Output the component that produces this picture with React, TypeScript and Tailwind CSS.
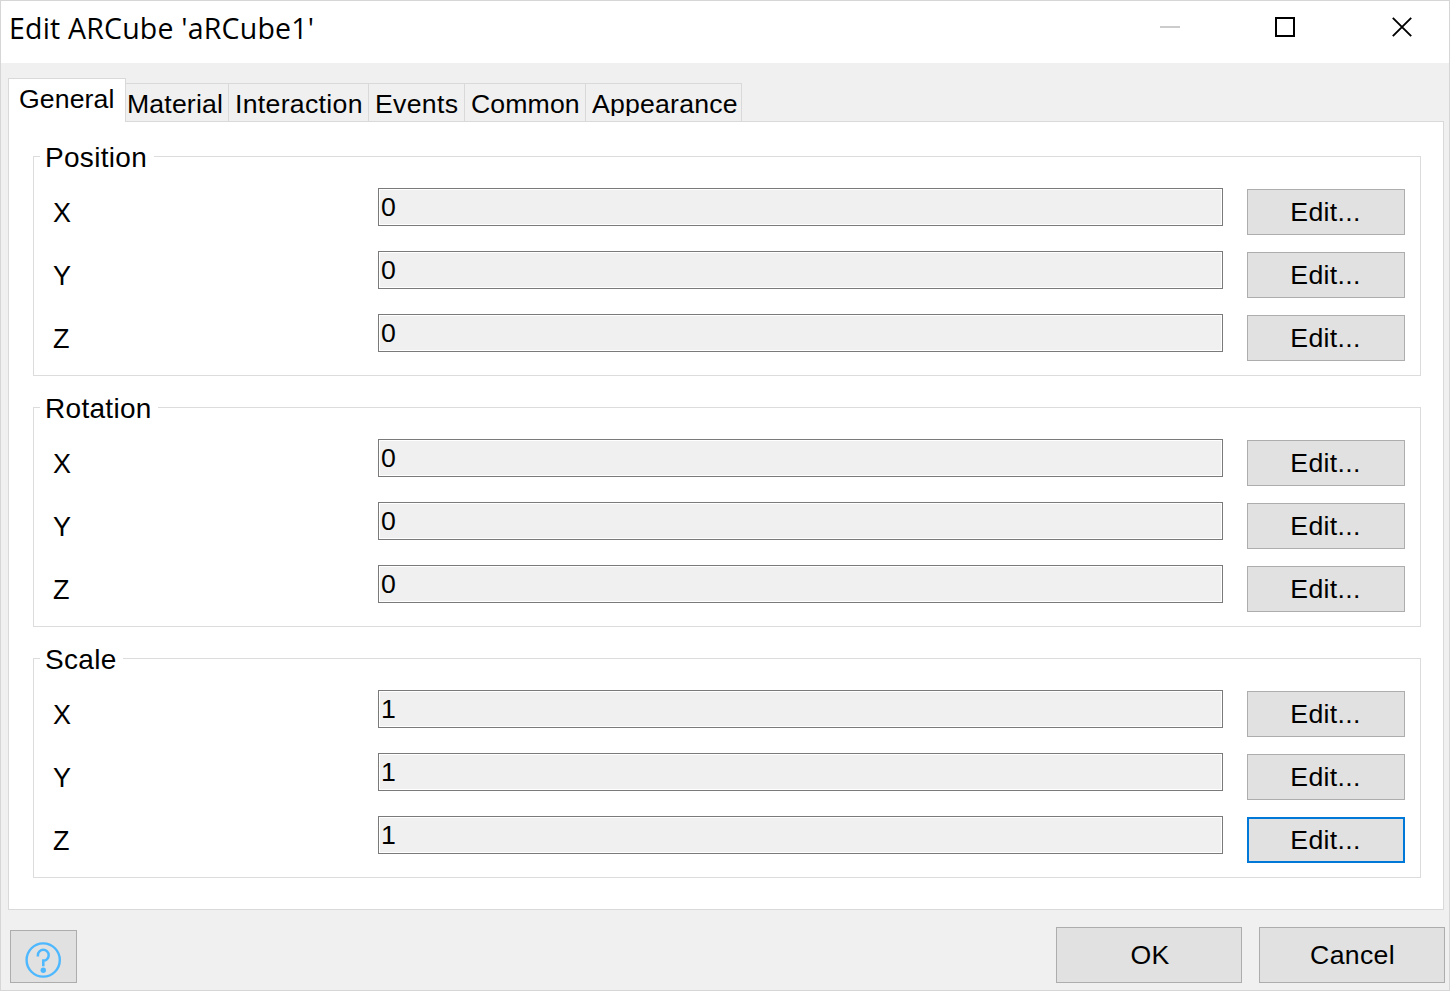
import React from "react";

type Axis = { label: string; value: string; focused?: boolean };
type GroupData = { title: string; legendClass: string; rows: Axis[] };

const groups: GroupData[] = [
  {
    title: "Position",
    legendClass: "w-[114px] tracking-[0.3px]",
    rows: [
      { label: "X", value: "0" },
      { label: "Y", value: "0" },
      { label: "Z", value: "0" },
    ],
  },
  {
    title: "Rotation",
    legendClass: "w-[118px] tracking-[0.3px]",
    rows: [
      { label: "X", value: "0" },
      { label: "Y", value: "0" },
      { label: "Z", value: "0" },
    ],
  },
  {
    title: "Scale",
    legendClass: "w-[83px] tracking-[0.3px]",
    rows: [
      { label: "X", value: "1" },
      { label: "Y", value: "1" },
      { label: "Z", value: "1", focused: true },
    ],
  },
];

const tabs = [
  { label: "Material", className: "w-[103px] pl-[1px] tracking-[0.15px]", textClass: "" },
  { label: "Interaction", className: "w-[140px] pl-[6px] tracking-[0.3px]", textClass: "" },
  { label: "Events", className: "w-[96px] pl-[6px] tracking-[0.3px]", textClass: "" },
  { label: "Common", className: "w-[121px] pl-[6px] tracking-[0.1px]", textClass: "" },
  {
    label: "Appearance",
    className: "w-[156px] pl-[6px] tracking-[0.2px]",
    textClass: "overflow-hidden",
  },
];

function TitleBar() {
  return (
    <header className="flex h-[62px] shrink-0 items-start justify-between bg-white">
      <h1 className="ml-2 mt-[7px] whitespace-nowrap font-['Open_Sans',sans-serif] text-[28.5px] leading-[40px] tracking-[0.2px]">
        Edit ARCube 'aRCube1'
      </h1>
      <div className="mr-[35px] mt-[15px] flex gap-[92px]">
        <svg width="24" height="24" viewBox="0 0 24 24">
          <rect x="2" y="10" width="20" height="2" fill="#cccccc" />
        </svg>
        <svg width="24" height="24" viewBox="0 0 24 24">
          <rect x="2" y="2" width="18" height="18" fill="none" stroke="#000" strokeWidth="2" />
        </svg>
        <svg width="24" height="24" viewBox="0 0 24 24">
          <path d="M2.8 1.8 L21.2 20.2 M21.2 1.8 L2.8 20.2" stroke="#000" strokeWidth="1.9" />
        </svg>
      </div>
    </header>
  );
}

function TabStrip() {
  return (
    <nav className="ml-[7px] flex h-[44px] items-end">
      <button className="relative z-10 flex h-[44px] w-[118px] items-start whitespace-nowrap border border-b-0 border-[#d9d9d9] bg-white pl-[10px] tracking-[0.1px]">
        <span className="leading-[40px]">General</span>
      </button>
      {tabs.map((tab) => (
        <button
          key={tab.label}
          className={`flex h-[39px] items-start whitespace-nowrap border-y border-r border-[#d9d9d9] ${tab.className}`}
        >
          <span className={`h-[32px] leading-[40px] ${tab.textClass}`}>{tab.label}</span>
        </button>
      ))}
    </nav>
  );
}

function AxisRow({ label, value, focused }: Axis) {
  return (
    <div className="flex h-[63px] items-start">
      <span className="w-[326px] pl-[1px] text-[27px] leading-[50px]">{label}</span>
      <div className="h-[38px] w-[845px] border border-[#7a7a7a] bg-white p-px">
        <div className="h-full bg-[#f0f0f0] pl-px leading-[34px]">{value}</div>
      </div>
      <button
        className={`ml-6 mt-px flex h-[46px] w-[158px] items-center justify-center bg-[#e1e1e1] pr-[1px] tracking-[0.3px] ${
          focused ? "border-2 border-[#0078d7]" : "border border-[#adadad]"
        }`}
      >
        Edit...
      </button>
    </div>
  );
}

function Group({ title, legendClass, rows }: GroupData) {
  return (
    <section className="h-[220px] w-[1388px] border border-[#dcdcdc]">
      <h2
        className={`-mt-[15px] ml-[6px] h-8 whitespace-nowrap bg-white pl-[5px] text-[28px] leading-8 ${legendClass}`}
      >
        {title}
      </h2>
      <div className="mt-[14px] pl-[18px]">
        {rows.map((row) => (
          <AxisRow key={row.label} {...row} />
        ))}
      </div>
    </section>
  );
}

export default function App() {
  return (
    <div className="flex h-[991px] w-[1450px] flex-col overflow-hidden border border-[#d6d6d6] bg-[#f0f0f0] font-['Liberation_Sans',Arial,sans-serif] text-[26.67px] text-black">
      <TitleBar />
      <div className="mt-[15px]">
        <TabStrip />
      </div>
      <main className="-mt-px ml-[7px] flex h-[789px] w-[1436px] flex-col gap-[31px] border border-[#d9d9d9] bg-white pl-[24px] pt-[34px]">
        {groups.map((group) => (
          <Group key={group.title} {...group} />
        ))}
      </main>
      <footer className="flex items-end pl-[9px] pr-1 pt-[17px]">
        <button className="flex h-[53px] w-[67px] items-center justify-center border border-[#adadad] bg-[#e1e1e1]">
          <svg className="mt-[7px]" width="38" height="38" viewBox="0 0 38 38" fill="none" stroke="#4db8ff">
            <circle cx="18.2" cy="19" r="16.6" strokeWidth="2.4" />
            <path d="M12.9 15.4 V14.2 A5.4 5.4 0 1 1 18.3 19.6 V25.2" strokeWidth="2.5" />
            <circle cx="18.3" cy="29.2" r="2.7" fill="#4db8ff" stroke="none" />
          </svg>
        </button>
        <button className="ml-auto h-[56px] w-[186px] border border-[#adadad] bg-[#e1e1e1] pl-[2px] tracking-[0.2px]">
          OK
        </button>
        <button className="ml-[17px] h-[56px] w-[186px] border border-[#adadad] bg-[#e1e1e1] pl-[1px] tracking-[0.3px]">
          Cancel
        </button>
      </footer>
    </div>
  );
}
